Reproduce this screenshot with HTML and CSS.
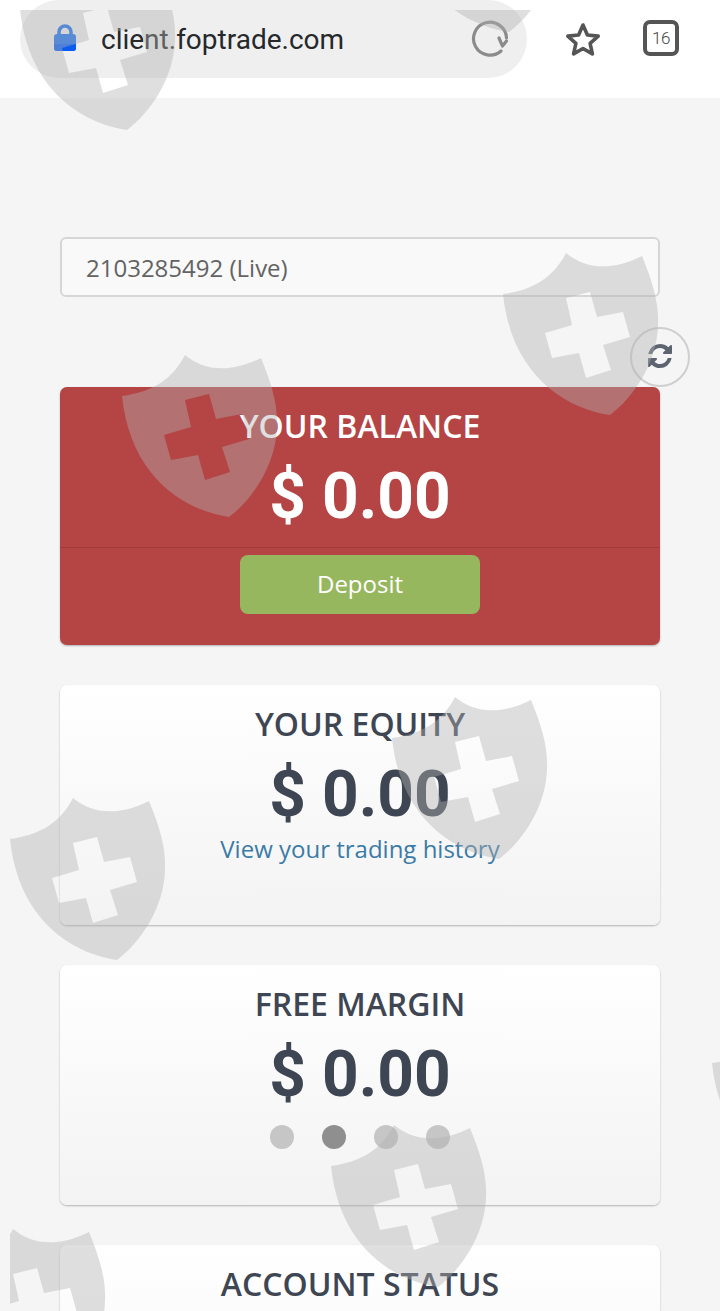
FILE: index.html
```html
<!DOCTYPE html>
<html lang="en">
<head>
<meta charset="utf-8">
<title>client.foptrade.com</title>
<link rel="stylesheet" href="styles.css">
</head>
<body>
<svg class="defs" width="0" height="0" aria-hidden="true">
  <symbol id="shield" viewBox="0 0 156 163">
    <path fill-rule="evenodd" d="M63 0C80 14 105 20 139 3C150 30 156 50 155 72C154 110 130 145 107 162C60 155 8 120 0 41C30 37 50 25 63 0ZM63 45L69 72L42 80L49 105L76 100L83 125L108 117L100 92L127 84L120 59L94 64L87 39Z"/>
  </symbol>
</svg>

<header class="browser-bar">
  <div class="address-pill">
    <svg class="lock" viewBox="0 0 24 28">
      <path class="lock-shackle" d="M6 12V8a6 6 0 0 1 12 0v4"/>
      <rect class="lock-body" x="1" y="10" width="22" height="17" rx="3"/>
      <path class="lock-shade" d="M1 20H23V24a3 3 0 0 1-3 3H4a3 3 0 0 1-3-3Z"/>
    </svg>
    <span class="url">client.foptrade.com</span>
    <svg class="reload" viewBox="0 0 40 40">
      <path d="M36.500 20A16.500 16.500 0 1 0 31 33"/>
      <path d="M29 20L32.500 28L36.500 23"/>
    </svg>
  </div>
  <svg class="star" viewBox="0 0 40 40">
    <path d="M20 5L24.400 15L35.200 16.100L27.100 23.300L29.400 33.900L20 28.500L10.600 33.900L12.900 23.300L4.800 16.100L15.600 15Z"/>
  </svg>
  <div class="tabs-count">16</div>
</header>

<main class="dashboard">
  <div class="account-select">2103285492 (Live)</div>

  <div class="refresh-row">
    <button class="refresh-btn" type="button" aria-label="Refresh">
      <svg viewBox="0 0 1792 1792">
        <path d="M1639 1056q0 5-1 7-64 268-268 434.5t-478 166.5q-146 0-282.5-55t-243.5-157l-129 129q-19 19-45 19t-45-19-19-45v-448q0-26 19-45t45-19h448q26 0 45 19t19 45-19 45l-137 137q71 66 161 102t187 36q134 0 250-65t186-179q11-17 53-117 8-23 30-23h192q13 0 22.500 9.500t9.500 22.500zm25-800v448q0 26-19 45t-45 19h-448q-26 0-45-19t-19-45 19-45l138-138q-148-137-349-137-134 0-250 65t-186 179q-11 17-53 117-8 23-30 23h-199q-13 0-22.500-9.500t-9.500-22.500v-7q65-268 270-434.500t480-166.500q146 0 284 55.500t245 156.500l130-129q19-19 45-19t45 19 19 45z"/>
      </svg>
    </button>
  </div>

  <section class="card card-balance">
    <div class="balance-head">
      <h2 class="card-title">YOUR BALANCE</h2>
      <div class="amount">$ 0.00</div>
    </div>
    <div class="balance-foot">
      <a class="deposit-btn" href="#">Deposit</a>
    </div>
  </section>

  <section class="card card-plain">
    <h2 class="card-title">YOUR EQUITY</h2>
    <div class="amount">$ 0.00</div>
    <a class="history-link" href="#">View your trading history</a>
  </section>

  <section class="card card-plain">
    <h2 class="card-title">FREE MARGIN</h2>
    <div class="amount">$ 0.00</div>
    <div class="dots">
      <span class="dot"></span>
      <span class="dot dot-active"></span>
      <span class="dot"></span>
      <span class="dot"></span>
    </div>
  </section>

  <section class="card card-plain">
    <h2 class="card-title">ACCOUNT STATUS</h2>
  </section>
</main>

<!-- Repeating shield stamp laid over the whole page -->
<div class="stamps" aria-hidden="true">
  <svg class="stamp s1"><use href="#shield"/></svg>
  <svg class="stamp s2"><use href="#shield"/></svg>
  <svg class="stamp s3"><use href="#shield"/></svg>
  <svg class="stamp s4"><use href="#shield"/></svg>
  <svg class="stamp s5"><use href="#shield"/></svg>
  <svg class="stamp s6"><use href="#shield"/></svg>
  <svg class="stamp s7"><use href="#shield"/></svg>
  <svg class="stamp s8"><use href="#shield"/></svg>
  <svg class="stamp s9"><use href="#shield"/></svg>
</div>
</body>
</html>
```

FILE: styles.css
```css
* {
  box-sizing: border-box;
}

html,
body {
  margin: 0;
  height: 1311px;
  overflow: hidden;
}

body {
  position: relative;
  background: #f5f5f5;
  font-family: "Open Sans", "Liberation Sans", sans-serif;
  color: #3f4653;
}

.defs {
  position: absolute;
}

/* Browser chrome */
.browser-bar {
  display: flex;
  align-items: flex-start;
  height: 98px;
  background: #fff;
  padding-left: 20px;
}

.address-pill {
  display: flex;
  align-items: center;
  width: 507px;
  height: 78px;
  border-radius: 39px;
  background: #efefef;
  padding: 0 17px 0 33px;
}

.lock {
  width: 24px;
  height: 28px;
  margin-top: -3px;
  flex: none;
}

.lock-shackle {
  fill: none;
  stroke: #1a6ff0;
  stroke-width: 3.5;
}

.lock-body {
  fill: #1a6ff0;
}

.lock-shade {
  fill: #0a5cf0;
}

.url {
  margin: 2px 0 0 24px;
  font-family: Roboto, "Liberation Sans", sans-serif;
  font-size: 28px;
  line-height: 76px;
  color: #26282b;
  flex: 1;
}

.reload {
  width: 40px;
  height: 40px;
  flex: none;
  margin-top: -2px;
  fill: none;
  stroke: #8b8b8b;
  stroke-width: 3.2;
  stroke-linecap: round;
  stroke-linejoin: round;
}

.star {
  width: 40px;
  height: 40px;
  margin: 20px 0 0 36px;
  flex: none;
  fill: none;
  stroke: #555;
  stroke-width: 3.6;
  stroke-linejoin: round;
}

.tabs-count {
  width: 36px;
  height: 36px;
  margin: 20px 0 0 40px;
  border: 4px solid #555;
  border-radius: 7px;
  display: flex;
  align-items: center;
  justify-content: center;
  font-family: Roboto, "Liberation Sans", sans-serif;
  font-weight: 300;
  font-size: 17px;
  letter-spacing: -0.5px;
  color: #444;
}

/* Dashboard column */
.dashboard {
  padding: 139px 60px 0;
}

.account-select {
  height: 60px;
  border: 2px solid #d6d6d6;
  border-radius: 6px;
  background: #f9f9f9;
  padding-left: 24px;
  font-size: 24px;
  line-height: 57px;
  color: #636363;
}

.refresh-row {
  display: flex;
  justify-content: flex-end;
  margin: 30px -30px 0 0;
}

.refresh-btn {
  width: 60px;
  height: 60px;
  padding: 0;
  border: 2px solid #cfcfcf;
  border-radius: 50%;
  background: #f5f5f5;
  display: flex;
  align-items: center;
  justify-content: center;
}

.refresh-btn svg {
  width: 28px;
  height: 28px;
  margin-top: -2px;
  fill: #5d6470;
}

/* Cards */
.card {
  margin-bottom: 40px;
  border-radius: 7px;
  text-align: center;
  box-shadow: 0 1px 2px rgba(0, 0, 0, 0.28);
}

.card-title {
  margin: 0;
  font-size: 32px;
  font-weight: 600;
  line-height: 40px;
}

.amount {
  font-family: Roboto, "Liberation Sans", sans-serif;
  font-size: 64px;
  font-weight: 700;
  line-height: 76px;
  margin-top: 13px;
}

.card-balance {
  height: 258px;
  background: #b54444;
  color: #fff;
}

.balance-head {
  height: 161px;
  padding-top: 19px;
  border-bottom: 1px solid #a23a3a;
}

.balance-foot {
  padding-top: 7px;
}

.deposit-btn {
  display: block;
  width: 240px;
  height: 59px;
  margin: 0 auto;
  border-radius: 8px;
  background: #97b75f;
  color: #fff;
  font-size: 24px;
  line-height: 58px;
  text-decoration: none;
}

.card-plain {
  height: 240px;
  padding-top: 19px;
  background: linear-gradient(#fff, #f3f3f3);
}

.history-link {
  display: block;
  margin-top: -1px;
  font-size: 24px;
  line-height: 34px;
  color: #3b7ba6;
  text-decoration: none;
}

.dots {
  display: flex;
  justify-content: center;
  gap: 28px;
  margin-top: 12px;
}

.dot {
  width: 24px;
  height: 24px;
  border-radius: 50%;
  background: #c6c6c6;
}

.dot-active {
  background: #8f8f8f;
}

/* Shield stamps */
.stamps {
  position: absolute;
  inset: 10px 0 0 10px;
  overflow: hidden;
  pointer-events: none;
}

.stamp {
  position: absolute;
  width: 156px;
  height: 163px;
  fill: rgba(177, 177, 177, 0.41);
}

.s1 { left: 10px; top: -42px; }
.s2 { left: 392px; top: -140px; }
.s3 { left: 493px; top: 243px; }
.s4 { left: 112px; top: 345px; }
.s5 { left: 382px; top: 687px; }
.s6 { left: 0; top: 788px; }
.s7 { left: 321px; top: 1115px; }
.s8 { left: 702px; top: 1012px; }
.s9 { left: -60px; top: 1219px; }
```
